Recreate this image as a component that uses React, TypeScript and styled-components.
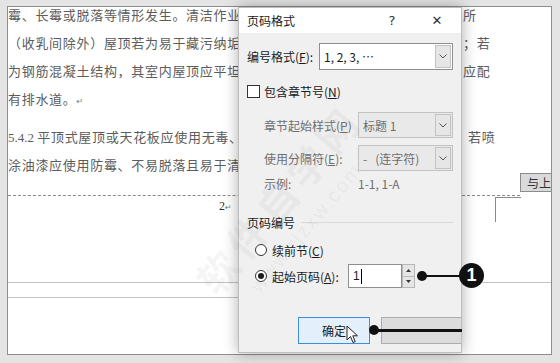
import React from 'react';
import styled, { createGlobalStyle } from 'styled-components';

const GlobalStyle = createGlobalStyle`
  html, body {
    margin: 0;
    padding: 0;
    background: #e4e4e4;
  }
  body {
    font-family: "Noto Sans CJK SC", "Noto Sans", sans-serif;
  }
`;

const Frame = styled.div`
  position: relative;
  width: 560px;
  height: 363px;
  box-sizing: border-box;
  padding: 6px 8px 8px 7px;
  background: #e4e4e4;
  overflow: hidden;
`;

/* ---------- document page ---------- */

const Page = styled.div`
  position: relative;
  height: 100%;
  box-sizing: border-box;
  background: #fff;
  border: 1px solid #8e8e8e;
  display: flex;
  flex-direction: column;
  overflow: hidden;
`;

const TextBlock = styled.div`
  display: flex;
  flex-direction: column;
  margin-top: -6px;
  font-family: "Noto Sans CJK SC", sans-serif;
  font-size: 13px;
  letter-spacing: 0.7px;
  color: #5c5c5c;
`;

const TextLine = styled.div<{ $gap?: number }>`
  display: grid;
  grid-template-columns: 455px 1fr;
  height: 28px;
  line-height: 28px;
  margin-top: ${({ $gap }) => $gap ?? 0}px;
  white-space: nowrap;
`;

const LineStart = styled.span`
  overflow: hidden;
`;

const LineEnd = styled.span<{ $shift?: number }>`
  padding-left: ${({ $shift }) => $shift ?? 0}px;
`;

const Latin = styled.span`
  font-family: "Liberation Serif", serif;
  letter-spacing: 0;
`;

const HeaderRule = styled.div`
  width: 512px;
  margin-top: 16px;
  border-top: 1px dashed #8a8a8a;
`;

const PageNumber = styled.div`
  margin: 2px 0 0 211px;
  height: 16px;
  font-family: "Liberation Serif", "DejaVu Serif", serif;
  font-size: 12px;
  line-height: 16px;
  color: #333;
`;

const ReturnMark = styled.span`
  font-family: "DejaVu Sans", sans-serif;
  font-size: 8px;
  color: #777;
`;

const BodyRule = styled.div<{ $top: number; $w?: number }>`
  margin-top: ${({ $top }) => $top}px;
  width: ${({ $w }) => ($w ? `${$w}px` : '100%')};
  border-top: 1px solid #c4c4c4;
`;

const CropMark = styled.div`
  position: absolute;
  left: 487px;
  top: 190px;
  width: 25px;
  height: 24px;
  border-top: 1px solid #8a8a8a;
  border-left: 1px solid #8a8a8a;
`;

const SameAsPrevious = styled.div`
  position: absolute;
  left: 512px;
  top: 166px;
  width: 40px;
  height: 19px;
  box-sizing: border-box;
  padding-left: 6px;
  background: #dadada;
  border: 1px solid #8c8c8c;
  font-size: 12px;
  line-height: 17px;
  color: #333;
  white-space: nowrap;
`;

/* ---------- dialog ---------- */

const Dialog = styled.div`
  position: absolute;
  left: 238px;
  top: 7px;
  width: 224px;
  height: 346px;
  box-sizing: border-box;
  border: 1px solid #bdbdbd;
  background: #f0f0f0;
  box-shadow: 0 0 14px rgba(0, 0, 0, 0.32);
  overflow: hidden;
  display: flex;
  flex-direction: column;
  font-family: "Noto Sans CJK SC", sans-serif;
  font-size: 12px;
  color: #1a1a1a;
  z-index: 2;
`;

const TitleBar = styled.div`
  height: 25px;
  flex-shrink: 0;
  background: #fff;
  display: flex;
  align-items: center;
  gap: 15px;
  padding: 0 9px 0 8px;
`;

const Title = styled.span`
  flex: 1;
`;

const TitleButton = styled.span`
  width: 30px;
  text-align: center;
  font-family: "DejaVu Sans", sans-serif;
  font-size: 13px;
  color: #333;
`;

const Body = styled.div`
  display: flex;
  flex-direction: column;
  padding: 10px 8px 0 8px;
`;

const Row = styled.div<{ $top?: number; $h: number; $indent?: number; $muted?: boolean }>`
  display: flex;
  align-items: center;
  height: ${({ $h }) => $h}px;
  margin-top: ${({ $top }) => $top ?? 0}px;
  padding-left: ${({ $indent }) => $indent ?? 0}px;
  color: ${({ $muted }) => ($muted ? '#6e6e6e' : '#1a1a1a')};
  white-space: nowrap;
`;

const Label = styled.span<{ $w?: number }>`
  width: ${({ $w }) => ($w ? `${$w}px` : 'auto')};
  flex-shrink: 0;
`;

const Select = styled.div<{ $w: number; $disabled?: boolean }>`
  width: ${({ $w }) => $w}px;
  height: 100%;
  box-sizing: border-box;
  display: flex;
  align-items: stretch;
  border: 1px solid ${({ $disabled }) => ($disabled ? '#c2c2c2' : '#8f8f8f')};
  background: ${({ $disabled }) => ($disabled ? '#e9e9e9' : '#fff')};
  color: ${({ $disabled }) => ($disabled ? '#6e6e6e' : '#1a1a1a')};
`;

const SelectValue = styled.span`
  flex: 1;
  display: flex;
  align-items: center;
  padding-left: 4px;
`;

const ArrowBox = styled.span`
  width: 16px;
  margin: 1px;
  box-sizing: border-box;
  display: grid;
  place-items: center;
  border: 1px solid #c3c3c3;
  background: #e6e6e6;
`;

const CheckBox = styled.span`
  width: 13px;
  height: 13px;
  box-sizing: border-box;
  margin-right: 4px;
  border: 1px solid #333;
  background: #fff;
`;

const SectionRule = styled.span`
  flex: 1;
  margin-left: 6px;
  border-top: 1px solid #dadada;
`;

const Radio = styled.span<{ $on?: boolean }>`
  width: 12px;
  height: 12px;
  box-sizing: border-box;
  margin-right: 5px;
  border: 1px solid #333;
  border-radius: 50%;
  background: #fff;
  display: grid;
  place-items: center;

  &::after {
    content: '';
    width: 6px;
    height: 6px;
    border-radius: 50%;
    background: ${({ $on }) => ($on ? '#1a1a1a' : 'transparent')};
  }
`;

const RadioLabel = styled.span<{ $w?: number }>`
  display: flex;
  align-items: center;
  width: ${({ $w }) => ($w ? `${$w}px` : 'auto')};
`;

const NumberInput = styled.div`
  width: 54px;
  height: 100%;
  box-sizing: border-box;
  border: 1px solid #8f8f8f;
  background: #fff;
  display: flex;
  align-items: center;
  padding-left: 4px;
  font-family: "Liberation Sans", sans-serif;
  font-size: 12px;
`;

const Caret = styled.span`
  width: 1px;
  height: 15px;
  margin-left: 1px;
  background: #000;
`;

const Spinner = styled.div`
  width: 13px;
  height: 100%;
  display: flex;
  flex-direction: column;
`;

const SpinPart = styled.span`
  flex: 1;
  display: grid;
  place-items: center;
  border: 1px solid #b8b8b8;
  background: #e6e6e6;
  & + & {
    border-top: none;
  }
`;

const Button = styled.div<{ $primary?: boolean; $w: number; $gap?: number }>`
  width: ${({ $w }) => $w}px;
  height: 100%;
  flex-shrink: 0;
  box-sizing: border-box;
  margin-left: ${({ $gap }) => $gap ?? 0}px;
  display: grid;
  place-items: center;
  border: 1px solid ${({ $primary }) => ($primary ? '#3c8ee0' : '#adadad')};
  background: ${({ $primary }) => ($primary ? '#e3effa' : '#dcdcdc')};
  color: #1a1a1a;
`;

/* ---------- annotations ---------- */

const Dot = styled.span<{ $x: number; $y: number }>`
  position: absolute;
  left: ${({ $x }) => $x - 5}px;
  top: ${({ $y }) => $y - 5}px;
  width: 10px;
  height: 10px;
  border-radius: 50%;
  background: #111;
  z-index: 4;
`;

const Leader = styled.span<{ $x: number; $y: number; $w: number; $t: number }>`
  position: absolute;
  left: ${({ $x }) => $x}px;
  top: ${({ $y, $t }) => $y - $t / 2}px;
  width: ${({ $w }) => $w}px;
  height: ${({ $t }) => $t}px;
  background: #111;
  z-index: 4;
`;

const Badge = styled.span`
  position: absolute;
  left: 459px;
  top: 263px;
  width: 25px;
  height: 25px;
  border-radius: 50%;
  background: #111;
  color: #fff;
  display: grid;
  place-items: center;
  font-family: "Liberation Sans", sans-serif;
  font-weight: 700;
  font-size: 18px;
  z-index: 4;
`;

const Pointer = styled.svg`
  position: absolute;
  left: 346px;
  top: 325px;
  z-index: 5;
`;

const Watermark = styled.div`
  position: absolute;
  left: 182px;
  top: 268px;
  transform: rotate(-50deg);
  transform-origin: left top;
  display: flex;
  flex-direction: column;
  color: rgba(110, 110, 110, 0.07);
  pointer-events: none;
  z-index: 6;
`;

const WatermarkBig = styled.span`
  font-size: 40px;
  font-weight: 700;
  letter-spacing: 6px;
`;

const WatermarkSmall = styled.span`
  margin-left: 30px;
  font-family: "Liberation Sans", sans-serif;
  font-size: 20px;
  letter-spacing: 2px;
`;

function Chevron() {
  return (
    <svg width="8" height="5" viewBox="0 0 8 5">
      <polyline points="0.5,0.5 4,4 7.5,0.5" fill="none" stroke="#555" strokeWidth="1" />
    </svg>
  );
}

function Tri({ up }: { up?: boolean }) {
  return (
    <svg width="5" height="3" viewBox="0 0 5 3">
      <polygon points={up ? '0,3 2.5,0 5,3' : '0,0 2.5,3 5,0'} fill="#333" />
    </svg>
  );
}

export default function App() {
  return (
    <>
      <GlobalStyle />
      <Frame>
        <Page>
          <TextBlock>
            <TextLine>
              <LineStart>霉、长霉或脱落等情形发生。清洁作业</LineStart>
              <LineEnd>所</LineEnd>
            </TextLine>
            <TextLine>
              <LineStart>（收乳间除外）屋顶若为易于藏污纳垢</LineStart>
              <LineEnd>；若</LineEnd>
            </TextLine>
            <TextLine>
              <LineStart>为钢筋混凝土结构，其室内屋顶应平坦</LineStart>
              <LineEnd>应配</LineEnd>
            </TextLine>
            <TextLine>
              <LineStart>
                有排水道。<ReturnMark>↵</ReturnMark>
              </LineStart>
              <LineEnd />
            </TextLine>
            <TextLine $gap={10}>
              <LineStart>
                <Latin>5.4.2 </Latin>平顶式屋顶或天花板应使用无毒、
              </LineStart>
              <LineEnd $shift={5}>若喷</LineEnd>
            </TextLine>
            <TextLine>
              <LineStart>涂油漆应使用防霉、不易脱落且易于清</LineStart>
              <LineEnd />
            </TextLine>
          </TextBlock>
          <HeaderRule />
          <PageNumber>
            2<ReturnMark>↵</ReturnMark>
          </PageNumber>
          <BodyRule $top={68} />
          <BodyRule $top={14} $w={240} />
          <CropMark />
          <SameAsPrevious>与上</SameAsPrevious>
        </Page>

        <Dialog>
          <TitleBar>
            <Title>页码格式</Title>
            <TitleButton>?</TitleButton>
            <TitleButton>✕</TitleButton>
          </TitleBar>
          <Body>
            <Row $h={27}>
              <Label $w={72}>
                编号格式(<u>F</u>):
              </Label>
              <Select $w={134}>
                <SelectValue>1, 2, 3, …</SelectValue>
                <ArrowBox>
                  <Chevron />
                </ArrowBox>
              </Select>
            </Row>
            <Row $top={13} $h={16}>
              <CheckBox />
              <span>
                包含章节号(<u>N</u>)
              </span>
            </Row>
            <Row $top={13} $h={26} $indent={17} $muted>
              <Label $w={94}>
                章节起始样式(<u>P</u>)
              </Label>
              <Select $w={95} $disabled>
                <SelectValue>标题 1</SelectValue>
                <ArrowBox>
                  <Chevron />
                </ArrowBox>
              </Select>
            </Row>
            <Row $top={7} $h={26} $indent={17} $muted>
              <Label $w={94}>
                使用分隔符(<u>E</u>):
              </Label>
              <Select $w={95} $disabled>
                <SelectValue>-&nbsp;&nbsp;&nbsp;(连字符)</SelectValue>
                <ArrowBox>
                  <Chevron />
                </ArrowBox>
              </Select>
            </Row>
            <Row $top={4} $h={16} $indent={17} $muted>
              <Label $w={94}>示例:</Label>
              <span>1-1, 1-A</span>
            </Row>
            <Row $top={23} $h={16}>
              <span>页码编号</span>
              <SectionRule />
            </Row>
            <Row $top={12} $h={16} $indent={8}>
              <RadioLabel>
                <Radio />
                续前节(<u>C</u>)
              </RadioLabel>
            </Row>
            <Row $top={6} $h={24} $indent={8}>
              <RadioLabel $w={93}>
                <Radio $on />
                起始页码(<u>A</u>):
              </RadioLabel>
              <NumberInput>
                1<Caret />
              </NumberInput>
              <Spinner>
                <SpinPart>
                  <Tri up />
                </SpinPart>
                <SpinPart>
                  <Tri />
                </SpinPart>
              </Spinner>
            </Row>
            <Row $top={29} $h={27} $indent={51}>
              <Button $primary $w={72}>
                确定
              </Button>
              <Button $w={90} $gap={11} />
            </Row>
          </Body>
        </Dialog>

        <Dot $x={422} $y={276} />
        <Leader $x={422} $y={276} $w={40} $t={2} />
        <Badge>1</Badge>
        <Dot $x={374} $y={330} />
        <Leader $x={374} $y={330} $w={88} $t={3} />

        <Pointer width="13" height="19" viewBox="0 0 13 19">
          <path
            d="M1 1 L1 15 L4.5 11.5 L7 17.5 L9.2 16.6 L6.8 10.8 L11.5 10.8 Z"
            fill="#fff"
            stroke="#222"
            strokeWidth="1"
            strokeLinejoin="round"
          />
        </Pointer>

        <Watermark>
          <WatermarkBig>软件自学网</WatermarkBig>
          <WatermarkSmall>www.rjzxw.com</WatermarkSmall>
        </Watermark>
      </Frame>
    </>
  );
}
